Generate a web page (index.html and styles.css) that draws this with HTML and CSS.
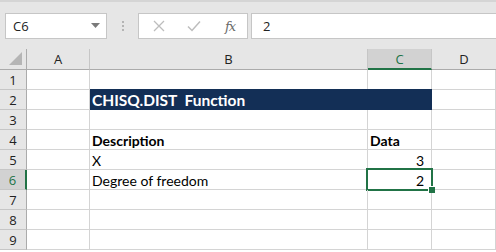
FILE: index.html
```html
<!DOCTYPE html>
<html>
<head>
<meta charset="utf-8">
<link rel="stylesheet" href="styles.css">
</head>
<body>
<div class="app">
  <div class="toolbar">
    <div class="namebox">
      <span class="ref">C6</span>
      <svg class="caret" width="9" height="5" viewBox="0 0 9 5"><path d="M0 0H9L4.5 5Z" fill="#7a7a7a"/></svg>
    </div>
    <div class="grip"><i></i><i></i><i></i></div>
    <div class="fxbox">
      <svg class="btn" width="12" height="12" viewBox="0 0 12 12"><path d="M1 1L11 11M11 1L1 11" stroke="#bdbdbd" stroke-width="1.3" fill="none"/></svg>
      <svg class="btn" width="14" height="12" viewBox="0 0 14 12"><path d="M1 6.5L5 10.5L13 1.5" stroke="#bdbdbd" stroke-width="1.5" fill="none"/></svg>
      <span class="fx">fx</span>
    </div>
    <div class="formula">2</div>
  </div>
  <div class="sheet">
    <div class="corner"><svg width="13" height="13" viewBox="0 0 13 13"><path d="M13 0V13H0Z" fill="#b5b5b5"/></svg></div>
    <div class="colhdr">A</div>
    <div class="colhdr">B</div>
    <div class="colhdr sel">C</div>
    <div class="colhdr last">D</div>

    <div class="rowhdr">1</div><div class="cell"></div><div class="cell"></div><div class="cell"></div><div class="cell"></div>
    <div class="rowhdr">2</div><div class="cell"></div><div class="cell title">CHISQ.DIST&nbsp; Function</div><div class="cell"></div>
    <div class="rowhdr">3</div><div class="cell"></div><div class="cell"></div><div class="cell"></div><div class="cell"></div>
    <div class="rowhdr">4</div><div class="cell"></div><div class="cell bold">Description</div><div class="cell bold">Data</div><div class="cell"></div>
    <div class="rowhdr">5</div><div class="cell"></div><div class="cell">X</div><div class="cell num">3</div><div class="cell"></div>
    <div class="rowhdr sel">6</div><div class="cell"></div><div class="cell">Degree of freedom</div><div class="cell num active">2<span class="handle"></span></div><div class="cell"></div>
    <div class="rowhdr">7</div><div class="cell"></div><div class="cell"></div><div class="cell"></div><div class="cell"></div>
    <div class="rowhdr">8</div><div class="cell"></div><div class="cell"></div><div class="cell"></div><div class="cell"></div>
    <div class="rowhdr">9</div><div class="cell"></div><div class="cell"></div><div class="cell"></div><div class="cell"></div>
  </div>
</div>
</body>
</html>
```
FILE: styles.css
```css
* { box-sizing: border-box; }
html, body { margin: 0; padding: 0; background: #fff; }
body { width: 496px; height: 252px; overflow: hidden; }
.app { width: 496px; height: 252px; overflow: hidden; }
.toolbar {
  height: 49px;
  background: #e6e6e6;
  border-top: 2px solid #d5d5d5;
  display: flex;
  align-items: flex-start;
  padding-top: 11px;
  padding-left: 5px;
}
.namebox {
  width: 102px; height: 26px;
  background: #fff;
  border: 1px solid #c6c6c6;
  display: flex; align-items: center; justify-content: space-between;
  padding: 0 6px 0 7px;
}
.ref { font-family: "Open Sans", sans-serif; font-size: 13px; color: #222; }
.caret { margin-top: -2px; }
.grip {
  width: 31px; height: 26px;
  display: flex; flex-direction: column; align-items: center; justify-content: center; gap: 2px;
}
.grip i { display: block; width: 2px; height: 2px; background: #b4b4b4; }
.fxbox {
  width: 110px; height: 26px;
  background: #fff;
  border: 1px solid #c6c6c6;
  display: flex; align-items: center;
  padding-left: 14px;
}
.fxbox .btn:nth-child(1) { margin-right: 22px; }
.fxbox .btn:nth-child(2) { margin-right: 24px; }
.fx { font-family: "DejaVu Serif", serif; font-style: italic; font-size: 13px; color: #6a6a6a; letter-spacing: -1px; }
.formula {
  margin-left: 3px;
  flex: 1; height: 26px;
  background: #fff;
  border: 1px solid #c6c6c6;
  border-right: none;
  font-family: "Open Sans", sans-serif; font-size: 13px; color: #222;
  padding-left: 11px; line-height: 24px;
}
.sheet {
  display: grid;
  grid-template-columns: 27px 63px 278px 64px 64px;
  grid-template-rows: 21px repeat(9, 20px) 20px;
  font-family: Lato, sans-serif;
}
.corner {
  background: #e6e6e6;
  border-right: 1px solid #ababab;
  border-bottom: 1px solid #ababab;
  display: flex; align-items: flex-end; justify-content: flex-end;
  padding: 0 4px 4px 0;
}
.colhdr {
  background: #e6e6e6;
  border-right: 1px solid #c6c6c6;
  border-bottom: 1px solid #ababab;
  font-family: "Open Sans", sans-serif; font-size: 13px; color: #222;
  display: flex; align-items: center; justify-content: center;
}
.colhdr.last { border-right: none; }
.colhdr.sel { background: #d2d2d2; color: #217346; border-bottom: 2px solid #217346; }
.rowhdr {
  background: #e6e6e6;
  border-right: 1px solid #ababab;
  border-bottom: 1px solid #c6c6c6;
  font-family: "Open Sans", sans-serif; font-size: 13px; color: #222;
  display: flex; align-items: center; justify-content: center;
}
.rowhdr.sel { background: #d2d2d2; color: #217346; border-right: 2px solid #217346; }
.cell {
  border-right: 1px solid #d4d4d4;
  border-bottom: 1px solid #d4d4d4;
  font-size: 14px; color: #000;
  display: flex; align-items: flex-end;
  padding: 0 2px 0 2px;
  line-height: 17px;
  white-space: nowrap;
  position: relative;
}
.bold { font-weight: bold; }
.num { justify-content: flex-end; padding-right: 7px; }
.title {
  grid-column: span 2;
  background: #132f56;
  border-color: #132f56;
  box-shadow: 0 -1px 0 #132f56;
  color: #fff; font-weight: bold;
  font-size: 15.5px;
  padding-bottom: 0;
}
.active { overflow: visible; }
.active::before {
  content: ""; position: absolute;
  left: -2px; top: -2px; right: -2px; bottom: -2px;
  border: 2px solid #217346;
}
.handle {
  position: absolute; right: -4px; bottom: -4px;
  width: 6px; height: 6px; background: #217346;
  box-shadow: -1px -1px 0 #fff;
  z-index: 2;
}
```
